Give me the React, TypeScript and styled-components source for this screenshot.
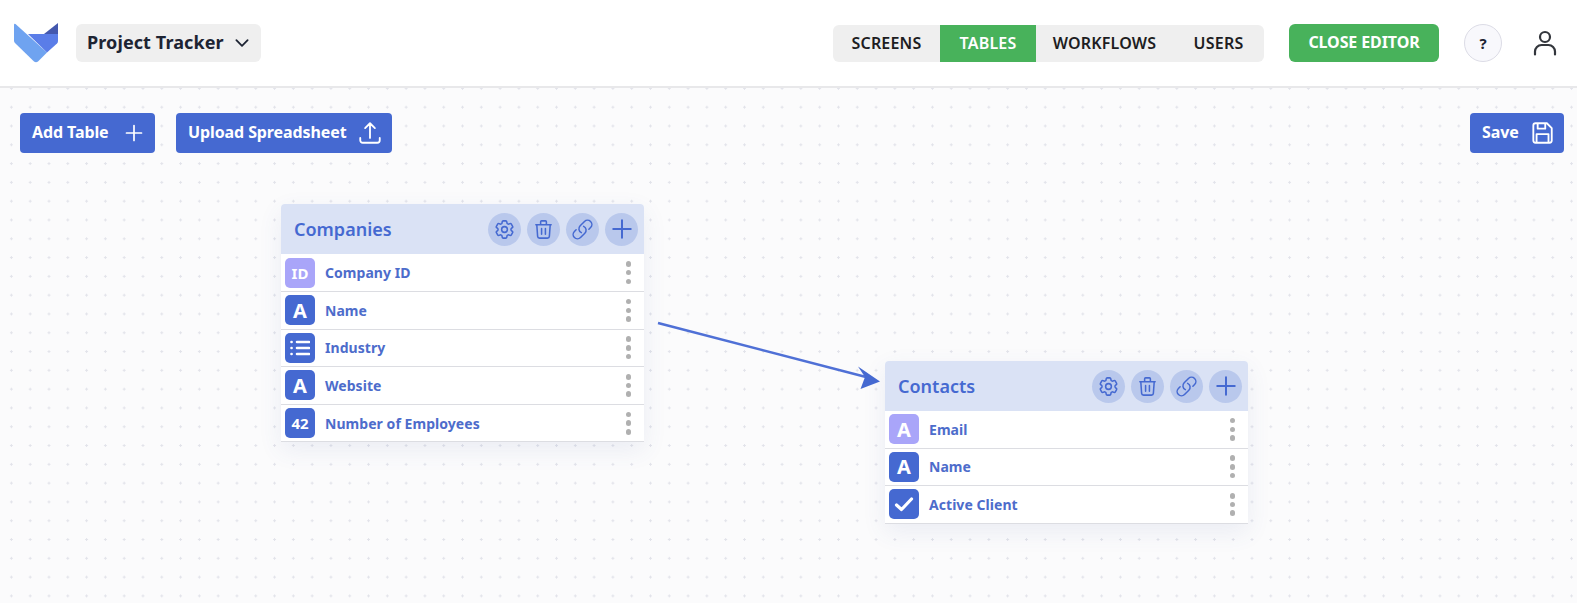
import React from "react";
import styled, { createGlobalStyle } from "styled-components";
import { HiOutlineCog6Tooth, HiOutlineLink, HiOutlineArrowUpTray, HiOutlineChevronDown, HiOutlinePlus } from "react-icons/hi2";
import { HiOutlineTrash } from "react-icons/hi";

const Global = createGlobalStyle`
  html, body { margin: 0; padding: 0; background: #fff; }
  body { font-family: "Noto Sans", "Open Sans", sans-serif; width: 1577px; height: 603px; overflow: hidden; }
  * { box-sizing: border-box; }
`;
const BLUE = "#4569d1";
const Page = styled.div`width: 1577px; height: 603px; display: flex; flex-direction: column;`;
const Header = styled.header`
  height: 88px; flex: none; display: flex; align-items: center; background: #fff;
  border-bottom: 2px solid #e8e8ea; padding: 0 20px 0 14px;
`;
const Logo = styled.svg`width: 44px; height: 40px; flex: none;`;
const ProjectPill = styled.button`
  margin-left: 18px; width: 185px; height: 38px; border: 0; border-radius: 6px; background: #efefef;
  font: 700 18px "Noto Sans", sans-serif; letter-spacing: .1px; color: #1d2433; display: flex; align-items: center; justify-content: space-between; padding: 0 10px 2px 11px;
  svg { width: 18px; height: 18px; stroke-width: 2.4; margin-top: 2px; }
`;
const Tabs = styled.nav`
  margin-left: auto; width: 431px; height: 37px; display: flex; border-radius: 6px; overflow: hidden; background: #efefef;
`;
const Tab = styled.div<{ $w: number; $active?: boolean }>`
  width: ${p => p.$w}px; display: flex; align-items: center; justify-content: center;
  font-weight: 600; font-size: 16px; letter-spacing: .2px; color: ${p => p.$active ? "#fff" : "#1d1d22"};
  background: ${p => p.$active ? "#48b25b" : "transparent"};
`;
const CloseBtn = styled.button`
  margin-left: 25px; width: 150px; height: 38px; border: 0; border-radius: 6px; background: #48b25b; color: #fff;
  font: 700 16px "Noto Sans", sans-serif; letter-spacing: -.1px; padding: 0 0 3px;
`;
const Help = styled.button`
  margin-left: 25px; width: 38px; height: 38px; border-radius: 50%; border: 1px solid #dcdce6; background: #f8f8fc;
  font: 700 15px "Noto Sans", sans-serif; color: #1d2433; padding: 0;
`;
const UserGlyph = styled.svg`margin-left: 31px; width: 24px; height: 26px; flex: none; margin-top: -1px;`;
const Canvas = styled.main`
  position: relative; flex: 1; background-color: #fbfbfc;
  background-image: radial-gradient(circle, #e2e3ea 1px, transparent 1.3px);
  background-size: 18.8px 18.8px; background-position: 2px -9px;
  padding: 25px 13px 0 20px;
`;
const Toolbar = styled.div`display: flex; align-items: flex-start; gap: 21px;`;
const ActionBtn = styled.button<{ $w: number; $push?: boolean }>`
  width: ${p => p.$w}px; height: 40px; border: 0; border-radius: 4px; background: ${BLUE}; color: #fff;
  font: 700 16px "Noto Sans", sans-serif; letter-spacing: -0.1px; display: flex; align-items: center; justify-content: space-between; padding: 0 9px 2px 12px;
  margin-left: ${p => p.$push ? "auto" : "0"};
  svg { margin-top: 2px; }
`;
const BtnPlus = styled(HiOutlinePlus)`width: 24px; height: 24px; stroke-width: 1.7;`;
const BtnTray = styled(HiOutlineArrowUpTray)`width: 26px; height: 26px; stroke-width: 1.7;`;
const Table = styled.section<{ $x: number; $y: number }>`
  position: absolute; left: ${p => p.$x}px; top: ${p => p.$y}px; width: 363px; background: #fff;
  border-radius: 4px 4px 0 0; box-shadow: 0 8px 24px rgba(70, 90, 160, .09);
`;
const TableHead = styled.div`
  height: 50px; background: #dae2f5; border-radius: 4px 4px 0 0; display: flex; align-items: center; padding: 0 6px 0 13px; color: ${BLUE};
`;
const TableTitle = styled.h2`margin: 0 auto 0 0; font-size: 18px; font-weight: 600; color: ${BLUE};`;
const RoundBtn = styled.span`
  width: 33px; height: 33px; border-radius: 50%; background: #b9c8ec; margin-left: 6px; display: flex; align-items: center; justify-content: center; color: ${BLUE};
  svg { width: 23px; height: 23px; stroke-width: 1.6; }
  &:last-child svg { width: 28px; height: 28px; stroke-width: 1.7; }
`;
const Row = styled.div`
  height: 37.6px; display: flex; align-items: center; padding: 0 13px 0 4px; border-bottom: 1px solid #dcdde2; background: #fff;
`;
const TypeIcon = styled.span<{ $light?: boolean; $size?: number }>`
  width: 30px; height: 30px; flex: none; border-radius: 5px; background: ${p => p.$light ? "#a9a5f9" : BLUE}; color: #fff;
  display: flex; align-items: center; justify-content: center; font-weight: 700; font-size: ${p => p.$size ?? 20}px;
`;
const RowLabel = styled.span`margin-left: 10px; font-size: 14px; font-weight: 700; letter-spacing: .05px; color: #4d6ccb; flex: 1;`;
const Kebab = styled.span`
  display: flex; flex-direction: column; gap: 3.2px;
  i { width: 5.5px; height: 5.5px; border-radius: 50%; background: #b0b0b0; display: block; }
`;
const ArrowSvg = styled.svg`position: absolute; left: 650px; top: 225px; width: 240px; height: 80px; overflow: visible;`;

const Save = () => (
  <svg width="26" height="26" viewBox="0 0 24 24" fill="none" stroke="currentColor" strokeWidth="1.7" strokeLinejoin="round">
    <path d="M4 5a2 2 0 0 1 2-2h10.500L21 7.500V19a2 2 0 0 1-2 2H6a2 2 0 0 1-2-2z" />
    <path d="M8 3v5h7V3M7 21v-8h11v8" />
  </svg>
);
const ListGlyph = () => (
  <svg width="20" height="16" viewBox="0 0 20 16" fill="none" stroke="#fff" strokeWidth="2.600" strokeLinecap="round">
    <path d="M7 2h12M7 8h12M7 14h12M1.500 2h.1M1.500 8h.1M1.500 14h.1" />
  </svg>
);
const CheckGlyph = () => (
  <svg width="20" height="16" viewBox="0 0 20 16" fill="none" stroke="#fff" strokeWidth="3.200" strokeLinecap="round" strokeLinejoin="round">
    <path d="M2.500 9l5 4.500L17.500 3" />
  </svg>
);
type F = { label: string; icon: React.ReactNode; light?: boolean; size?: number };
const companies: F[] = [
  { label: "Company ID", icon: "ID", light: true, size: 15 },
  { label: "Name", icon: "A" },
  { label: "Industry", icon: <ListGlyph /> },
  { label: "Website", icon: "A" },
  { label: "Number of Employees", icon: "42", size: 15 },
];
const contacts: F[] = [
  { label: "Email", icon: "A", light: true },
  { label: "Name", icon: "A" },
  { label: "Active Client", icon: <CheckGlyph /> },
];
const DataTable = ({ title, x, y, fields }: { title: string; x: number; y: number; fields: F[] }) => (
  <Table $x={x} $y={y}>
    <TableHead>
      <TableTitle>{title}</TableTitle>
      <RoundBtn><HiOutlineCog6Tooth /></RoundBtn>
      <RoundBtn><HiOutlineTrash /></RoundBtn>
      <RoundBtn><HiOutlineLink /></RoundBtn>
      <RoundBtn><HiOutlinePlus /></RoundBtn>
    </TableHead>
    {fields.map(f => (
      <Row key={f.label}>
        <TypeIcon $light={f.light} $size={f.size}>{f.icon}</TypeIcon>
        <RowLabel>{f.label}</RowLabel>
        <Kebab><i /><i /><i /></Kebab>
      </Row>
    ))}
  </Table>
);
export default function App() {
  return (
    <Page>
      <Global />
      <Header>
        <Logo viewBox="0 0 44 40">
          <path d="M0 2Q0 0 1.500 1L33 29.500 24 38.500Q22 40 20 38.500L1 20Q0 19 0 17.500z" fill="#6fa3f0" />
          <path d="M14 11H44V18Q44 19.500 43 20.500L33 29.500z" fill="#5a7de8" />
          <path d="M30 11L44 0V11z" fill="#4458ae" />
        </Logo>
        <ProjectPill>Project Tracker <HiOutlineChevronDown /></ProjectPill>
        <Tabs>
          <Tab $w={107}>SCREENS</Tab>
          <Tab $w={96} $active>TABLES</Tab>
          <Tab $w={137}>WORKFLOWS</Tab>
          <Tab $w={91}>USERS</Tab>
        </Tabs>
        <CloseBtn>CLOSE EDITOR</CloseBtn>
        <Help>?</Help>
        <UserGlyph viewBox="0 0 24 26" fill="none" stroke="#33363c" strokeWidth="2.200" strokeLinecap="round">
          <circle cx="12" cy="7" r="5" />
          <path d="M2 24.500v-3a6.500 6.500 0 0 1 6.500-6.500h7a6.500 6.500 0 0 1 6.500 6.500v3" />
        </UserGlyph>
      </Header>
      <Canvas>
        <Toolbar>
          <ActionBtn $w={135}>Add Table <BtnPlus /></ActionBtn>
          <ActionBtn $w={216}>Upload Spreadsheet <BtnTray /></ActionBtn>
          <ActionBtn $w={94} $push>Save <Save /></ActionBtn>
        </Toolbar>
        <DataTable title="Companies" x={281} y={116.4} fields={companies} />
        <DataTable title="Contacts" x={885} y={273} fields={contacts} />
        <ArrowSvg viewBox="0 0 240 80">
          <path d="M8 10 L216 64" stroke="#4f70d6" strokeWidth="2.600" fill="none" />
          <path d="M230 68.500 L210.500 76 L215 64 L208 53.500z" fill="#4569d1" />
        </ArrowSvg>
      </Canvas>
    </Page>
  );
}
